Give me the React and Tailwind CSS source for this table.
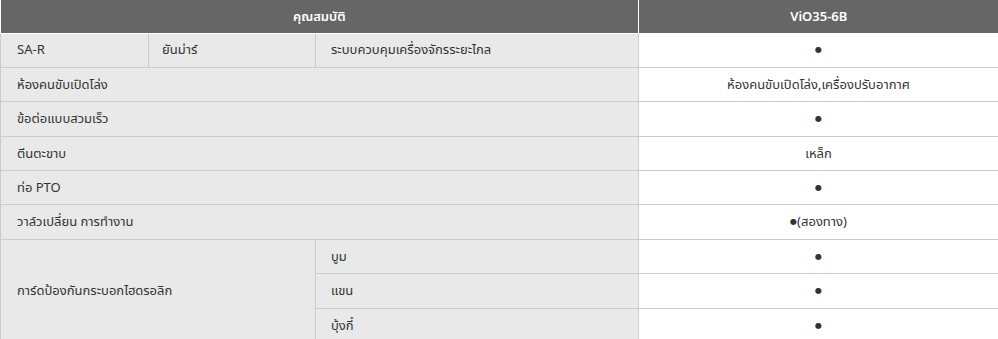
import React from "react";

const Dot = () => <span className="text-[8px] align-[2px] leading-none">●</span>;

const rows = [
  { label: "ห้องคนขับเปิดโล่ง", value: "ห้องคนขับเปิดโล่ง,เครื่องปรับอากาศ" },
  { label: "ข้อต่อแบบสวมเร็ว", value: <Dot /> },
  { label: "ตีนตะขาบ", value: "เหล็ก" },
  { label: "ท่อ PTO", value: <Dot /> },
  {
    label: "วาล์วเปลี่ยน การทำงาน",
    value: (
      <>
        <Dot />
        (สองทาง)
      </>
    ),
  },
];

const guard = ["บูม", "แขน", "บุ้งกี๋"];

const SpecTable = () => {
  const cellL = "bg-[#e9e9e9] border border-[#cccccc] px-4 text-left";
  const cellR = "bg-white border border-[#cccccc] text-center";

  return (
    <table className="w-[998px] table-fixed border-collapse text-[13px] text-[#333333]">
      <colgroup>
        <col className="w-[148px]" />
        <col className="w-[167px]" />
        <col className="w-[323px]" />
        <col className="w-[360px]" />
      </colgroup>
      <thead>
        <tr className="h-[33px] bg-[#666666] text-white">
          <th colSpan={3} className="border-r border-b border-white font-semibold">
            คุณสมบัติ
          </th>
          <th className="border-b border-white font-semibold">ViO35-6B</th>
        </tr>
      </thead>
      <tbody>
        <tr className="h-[34.4px]">
          <td className={cellL}>SA-R</td>
          <td className={cellL + " pl-[13px]"}>ยันม่าร์</td>
          <td className={cellL + " pl-[15px]"}>ระบบควบคุมเครื่องจักรระยะไกล</td>
          <td className={cellR}>
            <Dot />
          </td>
        </tr>
        {rows.map((r) => (
          <tr key={r.label} className="h-[34.4px]">
            <td colSpan={3} className={cellL}>
              {r.label}
            </td>
            <td className={cellR}>{r.value}</td>
          </tr>
        ))}
        {guard.map((g, i) => (
          <tr key={g} className="h-[34.4px]">
            {i === 0 && (
              <td rowSpan={3} colSpan={2} className={cellL}>
                การ์ดป้องกันกระบอกไฮดรอลิก
              </td>
            )}
            <td className={cellL + " pl-[15px]"}>{g}</td>
            <td className={cellR}>
              <Dot />
            </td>
          </tr>
        ))}
      </tbody>
    </table>
  );
};

export default function App() {
  return (
    <div
      className="w-[998px] h-[339px] overflow-hidden bg-white"
      style={{ fontFamily: '"Noto Sans", "Noto Sans Thai", "DejaVu Sans", sans-serif' }}
    >
      <SpecTable />
    </div>
  );
}
